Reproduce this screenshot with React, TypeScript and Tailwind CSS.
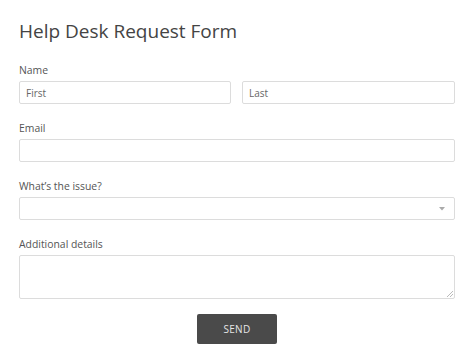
const font = { fontFamily: '"Open Sans", "Liberation Sans", sans-serif' }

function Label({ children }: { children: React.ReactNode }) {
  return <div className="text-[10.4px] leading-[14px] text-[#555] mb-1">{children}</div>
}

export default function App() {
  return (
    <div className="w-[474px] h-[364px] bg-white px-[19px] pt-[17px]" style={font}>
      <h1 className="text-[19px] leading-[29px] text-[#444] mb-[17px]">Help Desk Request Form</h1>

      <Label>Name</Label>
      <div className="flex gap-[11px] mb-[17px]">
        <input
          className="w-[212px] h-[23px] border border-[#dcdcdc] rounded-[2px] px-[6px] text-[10px] text-[#555] placeholder:text-[#666] outline-none"
          placeholder="First"
        />
        <input
          className="flex-1 h-[23px] border border-[#dcdcdc] rounded-[2px] px-[6px] text-[10px] text-[#555] placeholder:text-[#666] outline-none"
          placeholder="Last"
        />
      </div>

      <Label>Email</Label>
      <input className="block w-full h-[23px] border border-[#dcdcdc] rounded-[2px] mb-[17px] outline-none" />

      <Label>What’s the issue?</Label>
      <div className="flex items-center justify-end w-full h-[23px] border border-[#dcdcdc] rounded-[2px] mb-[17px] pr-[9px]">
        <svg width="6" height="4" viewBox="0 0 6 4">
          <path d="M0 0 L6 0 L3 3.5 Z" fill="#aaa" />
        </svg>
      </div>

      <Label>Additional details</Label>
      <div className="relative w-full h-[44px] border border-[#dcdcdc] rounded-[2px] mb-[15px]">
        <svg className="absolute right-[1px] bottom-[1px]" width="6" height="6" viewBox="0 0 6 6">
          <path d="M6 0 L0 6 M6 3 L3 6" stroke="#aaa" strokeWidth="0.8" />
        </svg>
      </div>

      <div className="flex justify-center">
        <button className="w-[80px] h-[30px] bg-[#4a4a4a] rounded-[2px] text-[#e5e5e5] text-[10px] tracking-[0.3px]">
          SEND
        </button>
      </div>
    </div>
  )
}
